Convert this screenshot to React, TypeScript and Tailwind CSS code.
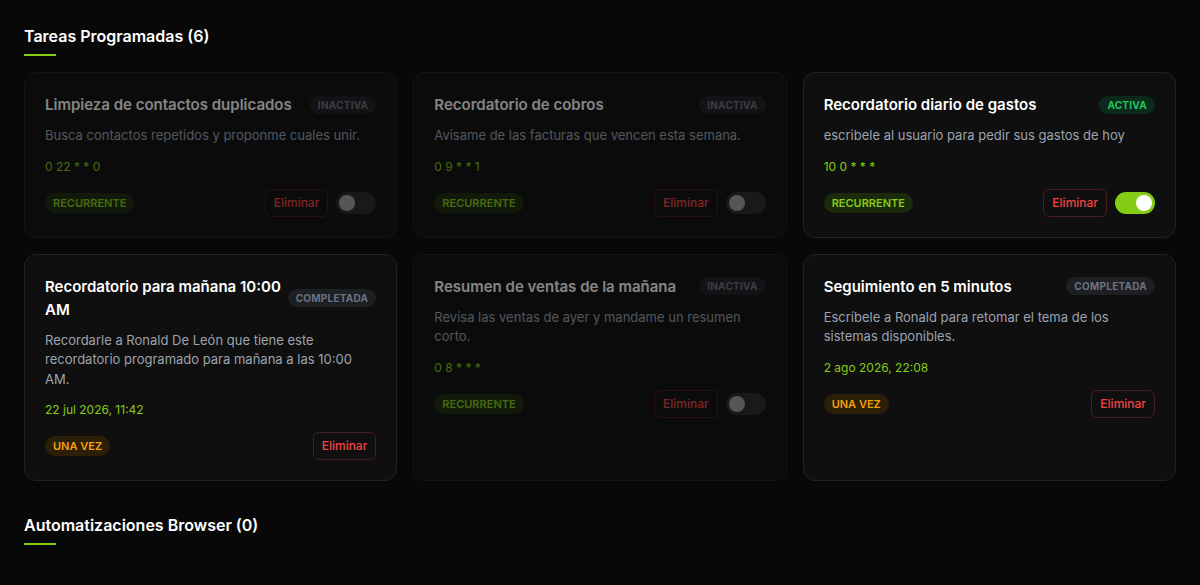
import React from "react";

type Task = {
  title: string;
  desc: string;
  sched: string;
  status: "INACTIVA" | "ACTIVA" | "COMPLETADA";
  kind: "RECURRENTE" | "UNA VEZ";
  toggle?: boolean;
  on?: boolean;
  dim?: boolean;
};

const tasks: Task[] = [
  {
    title: "Limpieza de contactos duplicados",
    desc: "Busca contactos repetidos y proponme cuales unir.",
    sched: "0 22 * * 0",
    status: "INACTIVA",
    kind: "RECURRENTE",
    toggle: true,
    on: false,
    dim: true,
  },
  {
    title: "Recordatorio de cobros",
    desc: "Avisame de las facturas que vencen esta semana.",
    sched: "0 9 * * 1",
    status: "INACTIVA",
    kind: "RECURRENTE",
    toggle: true,
    on: false,
    dim: true,
  },
  {
    title: "Recordatorio diario de gastos",
    desc: "escribele al usuario para pedir sus gastos de hoy",
    sched: "10 0 * * *",
    status: "ACTIVA",
    kind: "RECURRENTE",
    toggle: true,
    on: true,
  },
  {
    title: "Recordatorio para mañana 10:00 AM",
    desc: "Recordarle a Ronald De León que tiene este recordatorio programado para mañana a las 10:00 AM.",
    sched: "22 jul 2026, 11:42",
    status: "COMPLETADA",
    kind: "UNA VEZ",
  },
  {
    title: "Resumen de ventas de la mañana",
    desc: "Revisa las ventas de ayer y mandame un resumen corto.",
    sched: "0 8 * * *",
    status: "INACTIVA",
    kind: "RECURRENTE",
    toggle: true,
    on: false,
    dim: true,
  },
  {
    title: "Seguimiento en 5 minutos",
    desc: "Escríbele a Ronald para retomar el tema de los sistemas disponibles.",
    sched: "2 ago 2026, 22:08",
    status: "COMPLETADA",
    kind: "UNA VEZ",
  },
];

function StatusBadge({ status }: { status: Task["status"] }) {
  if (status === "ACTIVA")
    return (
      <span className="block shrink-0 rounded-full bg-[#0c2a1b] px-2 py-[3px] text-[10px] font-bold leading-3 tracking-wide text-[#22c55e]">
        ACTIVA
      </span>
    );
  return (
    <span className="block shrink-0 rounded-full bg-[#1e1f22] px-2 py-[3px] text-[10px] font-bold leading-3 tracking-wide text-[#6b7280]">
      {status}
    </span>
  );
}

function KindBadge({ kind }: { kind: Task["kind"] }) {
  if (kind === "UNA VEZ")
    return (
      <span className="rounded-full bg-[#2b1f08] px-2 py-1 text-[11px] font-semibold leading-3 text-[#f59e0b]">
        UNA VEZ
      </span>
    );
  return (
    <span className="rounded-full bg-[#1a2a0d] px-2 py-1 text-[11px] font-semibold leading-3 text-[#84cc16]">
      RECURRENTE
    </span>
  );
}

function Card({ t }: { t: Task }) {
  return (
    <div
      className={`flex flex-col rounded-xl border border-[#222222] bg-[#0f0f0f] p-5 ${
        t.dim ? "opacity-50" : ""
      }`}
    >
      <div className="flex items-center justify-between gap-1.5">
        <div className="min-w-0 text-[15px] font-semibold leading-[23px] text-white">{t.title}</div>
        <StatusBadge status={t.status} />
      </div>
      <p className="mt-2.5 text-[13px] leading-[19.5px] text-[#9ca3af]">{t.desc}</p>
      <div className="mt-[13px] text-[12px] leading-4 text-[#84cc16]">{t.sched}</div>
      <div className="mt-[14px] flex items-center justify-between">
        <KindBadge kind={t.kind} />
        <div className="flex items-center gap-2">
          <button className="h-7 rounded-md border border-[#4a1c1f] px-2 text-[12px] font-medium text-[#ef4444]">
            Eliminar
          </button>
          {t.toggle && (
            <div
              className={`flex h-[22px] w-10 items-center rounded-full px-[3px] ${
                t.on ? "justify-end bg-[#84cc16]" : "justify-start bg-[#2a2a2a]"
              }`}
            >
              <div className={`h-4 w-4 rounded-full ${t.on ? "bg-white" : "bg-[#a3a3a3]"}`} />
            </div>
          )}
        </div>
      </div>
    </div>
  );
}

function SectionTitle({ children }: { children: React.ReactNode }) {
  return (
    <div>
      <h2 className="text-[16px] font-semibold leading-6 text-white">{children}</h2>
      <div className="mt-[6px] h-[2px] w-8 bg-[#84cc16]" />
    </div>
  );
}

export default function App() {
  return (
    <div
      className="min-h-[585px] bg-[#080808] px-6 pt-6"
      style={{ fontFamily: "Inter, 'Noto Sans', sans-serif" }}
    >
      <SectionTitle>Tareas Programadas (6)</SectionTitle>
      <div className="mt-4 grid grid-cols-3 gap-4">
        {tasks.map((t, i) => (
          <Card key={i} t={t} />
        ))}
      </div>
      <div className="mt-8">
        <SectionTitle>Automatizaciones Browser (0)</SectionTitle>
      </div>
    </div>
  );
}
